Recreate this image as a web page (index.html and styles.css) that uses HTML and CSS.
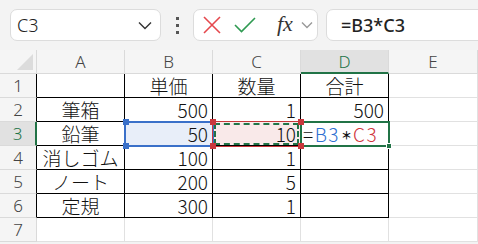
FILE: index.html
```html
<!doctype html>
<html>
	<head>
		<link rel="stylesheet" href="styles.css">
	</head>
	<body>
		<!-- Barra de fórmulas -->
		<div class="toolbar">
			<div class="namebox">
				<span>C3</span>
				<svg width="14" height="9" viewBox="0 0 14 9"><path d="M1 1.5 L7 7.5 L13 1.5" fill="none" stroke="#333" stroke-width="1.4"/></svg>
			</div>
			<div class="dots"><i></i><i></i><i></i></div>
			<div class="fbtns">
				<svg class="cancel" width="18" height="18" viewBox="0 0 18 18"><path d="M1 1 L17 17 M17 1 L1 17" stroke="#e5484d" stroke-width="1.6" fill="none"/></svg>
				<svg class="enter" width="22" height="16" viewBox="0 0 22 16"><path d="M1 8 L7.5 14.5 L21 1" stroke="#2f9a52" stroke-width="1.6" fill="none"/></svg>
				<span class="fx">fx</span>
				<svg width="12" height="8" viewBox="0 0 12 8"><path d="M1 1.5 L6 6.5 L11 1.5" fill="none" stroke="#999" stroke-width="1.4"/></svg>
			</div>
			<div class="formula">=B3*C3</div>
		</div>
		<!-- Hoja -->
		<div class="sheet">
			<div class="corner"><span class="tri"></span></div>
			<div class="ch">A</div><div class="ch">B</div><div class="ch">C</div><div class="ch sel">D</div><div class="ch">E</div>

			<div class="rh tb">1</div>
			<div class="c t"></div><div class="c t ctr">単価</div><div class="c t ctr">数量</div><div class="c t ctr">合計</div><div class="c"></div>

			<div class="rh tb">2</div>
			<div class="c t ctr">筆箱</div><div class="c t num">500</div><div class="c t num">1</div><div class="c t num">500</div><div class="c"></div>

			<div class="rh sel">3</div>
			<div class="c t ctr">鉛筆</div><div class="c t num blue">50</div><div class="c t num pink">10</div><div class="c t f">=<b class="rb">B3</b><b class="star">＊</b><b class="rr">C3</b></div><div class="c"></div>

			<div class="rh tb">4</div>
			<div class="c t ctr">消しゴム</div><div class="c t num">100</div><div class="c t num">1</div><div class="c t"></div><div class="c"></div>

			<div class="rh tb">5</div>
			<div class="c t ctr">ノート</div><div class="c t num">200</div><div class="c t num">5</div><div class="c t"></div><div class="c"></div>

			<div class="rh tb">6</div>
			<div class="c t ctr">定規</div><div class="c t num">300</div><div class="c t num">1</div><div class="c t"></div><div class="c"></div>

			<div class="rh">7</div>
			<div class="c"></div><div class="c"></div><div class="c"></div><div class="c"></div><div class="c"></div>

			<!-- Selecciones sobre las celdas -->
			<div class="ref-b"></div>
			<div class="ref-c"><div class="ants"></div></div>
			<div class="active"></div>
			<span class="h hb" style="left:123px;top:69px"></span>
			<span class="h hb" style="left:123px;top:93px"></span>
			<span class="h hr" style="left:210px;top:69px"></span>
			<span class="h hr" style="left:210px;top:93px"></span>
			<span class="h hr" style="left:298px;top:69px"></span>
			<span class="h hr" style="left:298px;top:93px"></span>
			<span class="fill"></span>
		</div>
	</body>
</html>
```
FILE: styles.css
```css
* {
	padding: 0px;
	margin: 0px;
	box-sizing: border-box;
}
body {
	width: 478px;
	height: 244px;
	overflow: hidden;
	background: #f3f3f3;
	font-family: "Noto Sans", "Noto Sans CJK JP", sans-serif;
}
/* Barra de fórmulas */
.toolbar {
	height: 50px;
	display: flex;
	align-items: flex-start;
	padding: 9px 0px 0px 10px;
}
.namebox {
	width: 151px;
	height: 32px;
	background: white;
	border: 1px solid #dcdcdc;
	border-radius: 7px;
	display: flex;
	align-items: center;
	justify-content: space-between;
	padding: 0px 8px 0px 6px;
	font-size: 18px;
	font-weight: 300;
	color: #222;
}
.dots {
	width: 32px;
	height: 32px;
	display: flex;
	flex-direction: column;
	align-items: center;
	justify-content: center;
	gap: 4px;
}
.dots i {
	width: 3px;
	height: 3px;
	background: #555;
}
.fbtns {
	width: 125px;
	height: 32px;
	background: white;
	border: 1px solid #dcdcdc;
	border-radius: 7px;
	display: flex;
	align-items: center;
	padding-left: 9px;
}
.fbtns .enter {
	margin-left: 13px;
}
.fx {
	font-family: "Liberation Serif", serif;
	font-style: italic;
	font-size: 22px;
	color: #333;
	margin-left: 21px;
	margin-top: -3px;
}
.fbtns svg:last-child {
	margin-left: 8px;
}
.formula {
	flex: 1;
	height: 32px;
	margin: 0px -10px 0px 8px;
	background: white;
	border: 1px solid #dcdcdc;
	border-radius: 7px;
	padding-left: 14px;
	font-size: 18px;
	font-weight: 500;
	line-height: 30px;
	color: #222;
}
/* Hoja */
.sheet {
	position: relative;
	display: grid;
	grid-template-columns: 37px repeat(4, 88px) 1fr;
	grid-auto-rows: 24px;
	background: white;
	font-family: "Noto Sans CJK JP", sans-serif;
	font-size: 19px;
	font-weight: 300;
	color: #111;
}
.corner, .ch, .rh {
	background: #f5f5f5;
	color: #444;
	font-family: "Noto Sans", sans-serif;
	font-size: 17px;
	font-weight: 300;
	display: flex;
	align-items: center;
	justify-content: center;
	border-right: 1px solid #dadada;
	border-bottom: 1px solid #dadada;
}
.corner {
	position: relative;
}
.tri {
	position: absolute;
	right: 3px;
	bottom: 3px;
	width: 0px;
	height: 0px;
	border-left: 16px solid transparent;
	border-bottom: 16px solid #dcdcdc;
}
.ch.sel {
	background: #e1e1e1;
	color: #217346;
	border-bottom: 2px solid #217346;
}
.rh.tb {
	border-right-color: #000;
}
.rh.sel {
	background: #e1e1e1;
	color: #217346;
	border-right: 2px solid #217346;
}
.c {
	border-right: 1px solid #e1e1e1;
	border-bottom: 1px solid #e1e1e1;
	line-height: 23px;
	padding: 0px 4px;
	white-space: nowrap;
}
.c.t {
	border-right-color: #000;
	border-bottom-color: #000;
}
.ctr {
	text-align: center;
}
.num {
	text-align: right;
}
.blue {
	background: #e8eef9;
}
.pink {
	background: #f9e9e9;
}
.f {
	padding-left: 2px;
	letter-spacing: 1.5px;
}
.f b {
	font-weight: 300;
}
.f .star {
	font-size: 11px;
	font-weight: 700;
	letter-spacing: 0px;
	margin: 0px 1px;
	vertical-align: 2px;
}
.rb {
	color: #2e6fd1;
}
.rr {
	color: #d0343c;
}
/* Bordes de selección */
.ref-b {
	position: absolute;
	left: 124px;
	top: 71px;
	width: 90px;
	height: 26px;
	border: 2px solid #3a70c9;
}
.ref-c {
	position: absolute;
	left: 212px;
	top: 71px;
	width: 89px;
	height: 26px;
	border: 1px solid #c8383c;
	padding: 1px;
}
.ants {
	width: 100%;
	height: 100%;
	border: 2px dashed #217346;
}
.active {
	position: absolute;
	left: 300px;
	top: 71px;
	width: 90px;
	height: 26px;
	border: 2px solid #217346;
}
.h {
	position: absolute;
	width: 6px;
	height: 6px;
}
.hb {
	background: #3a70c9;
}
.hr {
	background: #c8383c;
}
.fill {
	position: absolute;
	left: 386px;
	top: 93px;
	width: 6px;
	height: 6px;
	background: #217346;
	border: 1px solid white;
}
```
